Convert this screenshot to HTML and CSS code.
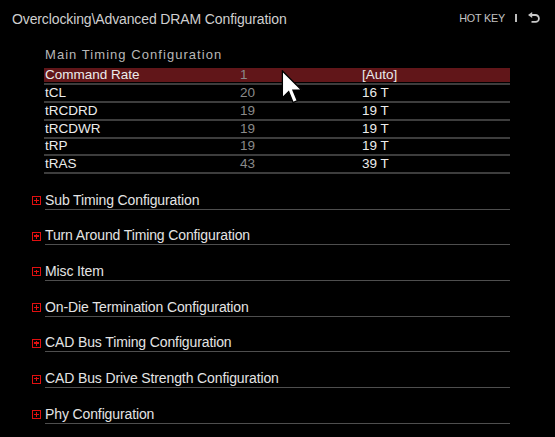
FILE: index.html
```html
<!DOCTYPE html>
<html>
<head>
<meta charset="utf-8">
<link rel="stylesheet" href="styles.css">
</head>
<body>
<div class="screen">
  <header class="topbar">
    <div class="path">Overclocking\Advanced DRAM Configuration</div>
    <div class="hotkey">
      <span class="hk-text">HOT KEY</span>
      <span class="hk-sep"></span>
      <svg class="hk-back" width="12" height="11" viewBox="0 0 12 11">
        <path d="M3.5 3 H7.5 A3.4 3.4 0 0 1 7.5 9.8 H3.5" fill="none" stroke="#c8c8c8" stroke-width="1.8"/>
        <path d="M0 3 L4.2 0 L4.2 6 Z" fill="#c8c8c8"/>
      </svg>
    </div>
  </header>

  <main class="content">
    <div class="group-title">Main Timing Configuration</div>
    <div class="timings">
      <div class="row selected"><span class="name">Command Rate</span><span class="def">1</span><span class="cur">[Auto]</span></div>
      <div class="row"><span class="name">tCL</span><span class="def">20</span><span class="cur">16 T</span></div>
      <div class="row"><span class="name">tRCDRD</span><span class="def">19</span><span class="cur">19 T</span></div>
      <div class="row"><span class="name">tRCDWR</span><span class="def">19</span><span class="cur">19 T</span></div>
      <div class="row"><span class="name">tRP</span><span class="def">19</span><span class="cur">19 T</span></div>
      <div class="row"><span class="name">tRAS</span><span class="def">43</span><span class="cur">39 T</span></div>
    </div>

    <div class="sections">
      <div class="section"><span class="plus"></span><span class="label">Sub Timing Configuration</span></div>
      <div class="section"><span class="plus"></span><span class="label">Turn Around Timing Configuration</span></div>
      <div class="section"><span class="plus"></span><span class="label">Misc Item</span></div>
      <div class="section"><span class="plus"></span><span class="label">On-Die Termination Configuration</span></div>
      <div class="section"><span class="plus"></span><span class="label">CAD Bus Timing Configuration</span></div>
      <div class="section"><span class="plus"></span><span class="label">CAD Bus Drive Strength Configuration</span></div>
      <div class="section"><span class="plus"></span><span class="label">Phy Configuration</span></div>
    </div>
  </main>

  <svg class="cursor" width="24" height="36" viewBox="0 0 12.5 19.5">
    <path d="M0.5 0.5 L0.5 15 L3.9 11.7 L6.3 17.6 L8.6 16.6 L6.2 10.9 L10.9 10.9 Z" fill="#fff" stroke="#000" stroke-width="0.7" stroke-linejoin="miter"/>
  </svg>
</div>
</body>
</html>
```

FILE: styles.css
```css
* { box-sizing: border-box; }

html, body {
  margin: 0;
  padding: 0;
  background: #000;
}

body {
  font-family: "Liberation Sans", Arial, sans-serif;
  color: #e6e6e6;
}

.screen {
  position: relative;
  width: 555px;
  height: 437px;
  overflow: hidden;
  background: #000;
}

.topbar {
  display: flex;
  justify-content: space-between;
  align-items: center;
  height: 38px;
  padding: 0 15px 0 12px;
}

.path {
  font-size: 14px;
  color: #cfcfcf;
  letter-spacing: -0.12px;
  line-height: 16px;
  margin-top: -1px;
}

.hotkey {
  display: flex;
  align-items: center;
  margin-top: -3px;
}

.hk-text {
  font-size: 10.8px;
  color: #c4c4c4;
  letter-spacing: -0.2px;
  line-height: 12px;
}

.hk-sep {
  width: 2px;
  height: 8px;
  background: #bdbdbd;
  margin: 0 11px 0 10px;
}

.hk-back {
  display: block;
}

.content {
  padding-left: 44px;
  width: 510px;
}

.group-title {
  font-size: 13px;
  color: #b8b8b8;
  letter-spacing: 1.05px;
  line-height: 16px;
  padding-left: 1px;
  margin-top: 9px;
  height: 20.5px;
}

.timings {
  display: flex;
  flex-direction: column;
}

.row {
  display: flex;
  align-items: center;
  height: 17.75px;
  padding-bottom: 1px;
  border-bottom: 2px solid #3d3d3d;
  background-clip: content-box;
  font-size: 13.5px;
  line-height: 15px;
}

.row.selected {
  background-color: #611619;
}

.name {
  width: 196px;
  padding-left: 1px;
  color: #ececec;
}

.def {
  width: 122px;
  color: #8a8a8a;
}

.cur {
  color: #ececec;
}

.sections {
  display: flex;
  flex-direction: column;
}

.section {
  display: flex;
  align-items: center;
  height: 35.7px;
  padding-top: 17.5px;
  margin-left: -12px;
}

.plus {
  position: relative;
  width: 9px;
  height: 9px;
  border: 1.3px solid #e01010;
  margin-right: 4px;
  flex: none;
}

.plus::before,
.plus::after {
  content: "";
  position: absolute;
  background: #e01010;
}

.plus::before {
  left: 1.2px;
  right: 1.2px;
  top: 2.6px;
  height: 1.3px;
}

.plus::after {
  top: 1.2px;
  bottom: 1.2px;
  left: 2.6px;
  width: 1.3px;
}

.label {
  flex: 1;
  font-size: 14px;
  line-height: 16px;
  padding-left: 0;
  letter-spacing: -0.12px;
  color: #e4e4e4;
  border-bottom: 1.5px solid #4e4e4e;
  padding-bottom: 1px;
}

.cursor {
  position: absolute;
  left: 281px;
  top: 70px;
}
```
